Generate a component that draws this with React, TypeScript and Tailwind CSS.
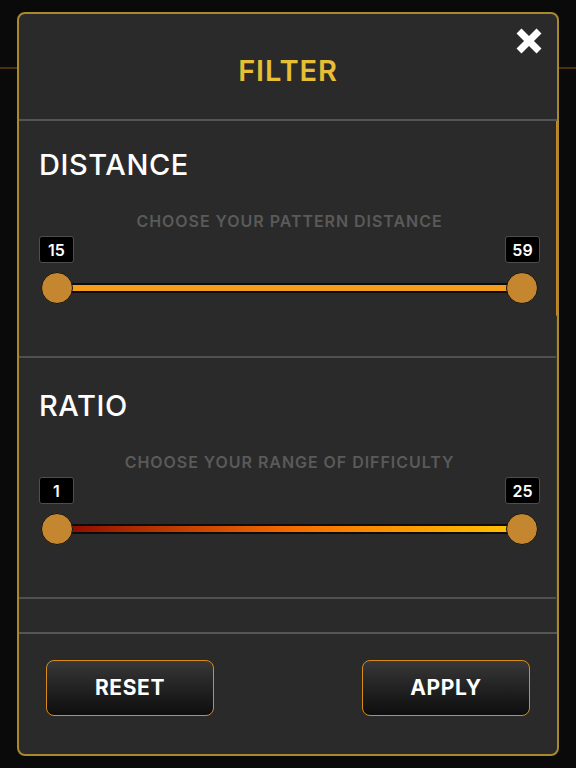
import type { ReactNode } from 'react';

// ---------------------------------------------------------------------------
// Slider row (static picture of a two-thumb range)
// ---------------------------------------------------------------------------
function RangeSlider({ min, max, fill }: { min: string; max: string; fill: string }) {
  return (
    <div>
      <div className="flex justify-between">
        <ValueBadge>{min}</ValueBadge>
        <ValueBadge>{max}</ValueBadge>
      </div>
      <div className="mt-[9px] flex items-center px-[2px]">
        <div className="relative z-10 h-8 w-8 shrink-0 rounded-full border-[1.5px] border-[#141414] bg-[#c4862e]" />
        <div className="-mx-4 flex h-[10px] flex-1 items-center rounded-[2px] bg-[#0c0c0c] px-[1px]">
          <div className={`h-[6px] w-full ${fill}`} />
        </div>
        <div className="relative z-10 h-8 w-8 shrink-0 rounded-full border-[1.5px] border-[#141414] bg-[#c4862e]" />
      </div>
    </div>
  );
}

function ValueBadge({ children }: { children: ReactNode }) {
  return (
    <div className="flex h-[27px] w-[35px] items-center justify-center rounded-[3px] border border-[#4e4e4e] bg-black text-[16px] font-semibold leading-none text-white">
      {children}
    </div>
  );
}

function FilterSection({
  title,
  hint,
  top,
  children,
}: {
  title: string;
  hint: string;
  top: string;
  children: ReactNode;
}) {
  return (
    <section className={`border-b-2 border-[#505050] pb-[52px] pl-5 pr-[17px] ${top}`}>
      <h2 className="text-[29px] font-medium leading-[34px] tracking-[0.02em] text-white">{title}</h2>
      <p className="mt-[29px] text-center text-[16px] font-semibold leading-5 tracking-[0.06em] text-[#5a5a5a]">
        {hint}
      </p>
      <div className="mt-[5px]">{children}</div>
    </section>
  );
}

// ---------------------------------------------------------------------------
// Page
// ---------------------------------------------------------------------------
export default function App() {
  return (
    <div className="relative h-[768px] w-full overflow-hidden bg-[#0a0a0a] font-['Inter','Liberation_Sans',sans-serif]">
      {/* page header behind the dialog */}
      <div className="h-[69px] border-b-2 border-[#4a3110]" />

      {/* dialog */}
      <div className="absolute left-[17px] top-3 flex h-[744px] w-[542px] flex-col overflow-hidden rounded-lg border-2 border-[#a8892c] bg-[#2a2a2a]">
        <header className="relative flex h-[107px] shrink-0 items-center justify-center border-b-2 border-[#555555] pt-[7px]">
          <h1 className="text-[29px] font-semibold leading-none tracking-[0.03em] text-[#e6bf35]">FILTER</h1>
          <button className="absolute right-[14px] top-[13px] h-7 w-7" aria-label="Close">
            <svg viewBox="0 0 28 28" className="h-7 w-7">
              <path d="M4 4 L24 24 M24 4 L4 24" stroke="#ffffff" strokeWidth="7" />
            </svg>
          </button>
        </header>

        {/* scrolling body */}
        <div className="relative h-[511px] shrink-0 overflow-hidden">
          <FilterSection title="DISTANCE" hint="CHOOSE YOUR PATTERN DISTANCE" top="pt-[27px]">
            <RangeSlider min="15" max="59" fill="bg-[#f59c1a]" />
          </FilterSection>
          <FilterSection title="RATIO" hint="CHOOSE YOUR RANGE OF DIFFICULTY" top="pt-[31px]">
            <RangeSlider
              min="1"
              max="25"
              fill="bg-gradient-to-r from-[#8a0000] via-[#f56a00] to-[#ffc400]"
            />
          </FilterSection>

          {/* scrollbar */}
          <div className="absolute right-0 top-0 h-full w-px bg-[#3a3522]" />
          <div className="absolute -right-[2px] top-0 h-[195px] w-[3px] rounded-b-sm bg-[#c8882a]" />
        </div>

        <footer className="flex flex-1 justify-between border-t-2 border-[#555555] px-[27px] pt-[26px]">
          <button className="h-14 w-[168px] rounded-lg border-[1.5px] border-[#d88a1a] bg-gradient-to-b from-[#383838] to-[#0e0e0e] text-[21px] font-bold tracking-[0.03em] text-white">
            RESET
          </button>
          <button className="h-14 w-[168px] rounded-lg border-[1.5px] border-[#d88a1a] bg-gradient-to-b from-[#383838] to-[#0e0e0e] text-[21px] font-bold tracking-[0.03em] text-white">
            APPLY
          </button>
        </footer>
      </div>
    </div>
  );
}
